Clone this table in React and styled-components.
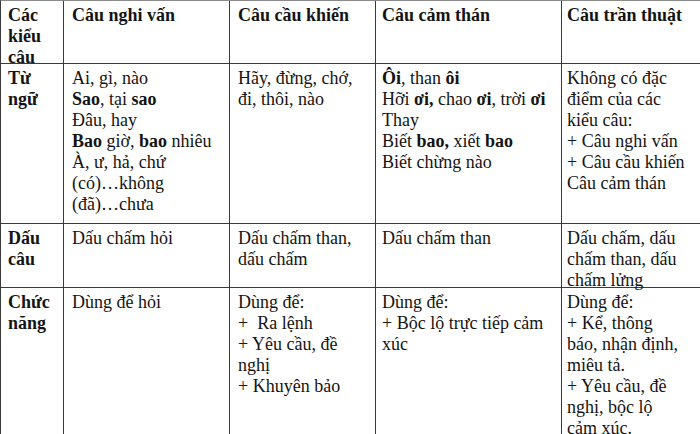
import React from 'react';
import styled, { createGlobalStyle } from 'styled-components';

const GlobalStyle = createGlobalStyle`
  html, body {
    margin: 0;
    padding: 0;
    background: #ffffff;
    overflow: hidden;
  }
`;

const Table = styled.div`
  display: grid;
  grid-template-columns: 63px 166px 146px 186px 160px;
  grid-template-rows: 63px 160px 64px 160px;
  width: 722px;
  border-top: 1px solid #8a8a8a;
  border-left: 1px solid #3a3a3a;
  font-family: "Liberation Serif", "Times New Roman", serif;
  font-size: 18px;
  line-height: 21px;
  color: #141414;
`;

const Cell = styled.div`
  border-right: 1px solid #3a3a3a;
  border-bottom: 1px solid #3a3a3a;
  padding: 4px 4px 0 ${(p) => p.$pad}px;
  overflow: visible;
  white-space: pre;
  font-weight: ${(p) => (p.$head ? 700 : 400)};
`;

const Line = styled.div``;

const pads = [7, 8, 8, 6, 5];

const rows = [
  [
    ['Các', 'kiểu', 'câu'],
    ['Câu nghi vấn'],
    ['Câu cầu khiến'],
    ['Câu cảm thán'],
    ['Câu trần thuật'],
  ],
  [
    ['Từ', 'ngữ'],
    [
      'Ai, gì, nào',
      <><b>Sao</b>, tại <b>sao</b></>,
      'Đâu, hay',
      <><b>Bao</b> giờ, <b>bao</b> nhiêu</>,
      'À, ư, hả, chứ',
      '(có)…không',
      '(đã)…chưa',
    ],
    ['Hãy, đừng, chớ,', 'đi, thôi, nào'],
    [
      <><b>Ôi</b>, than <b>ôi</b></>,
      <>Hỡi <b>ơi,</b> chao <b>ơi</b>, trời <b>ơi</b></>,
      'Thay',
      <>Biết <b>bao,</b> xiết <b>bao</b></>,
      'Biết chừng nào',
    ],
    [
      'Không có đặc',
      'điểm của các',
      'kiểu câu:',
      '+ Câu nghi vấn',
      '+ Câu cầu khiến',
      'Câu cảm thán',
    ],
  ],
  [
    ['Dấu', 'câu'],
    ['Dấu chấm hỏi'],
    ['Dấu chấm than,', 'dấu chấm'],
    ['Dấu chấm than'],
    ['Dấu chấm, dấu', 'chấm than, dấu', 'chấm lửng'],
  ],
  [
    ['Chức', 'năng'],
    ['Dùng để hỏi'],
    ['Dùng để:', '+  Ra lệnh', '+ Yêu cầu, đề', 'nghị', '+ Khuyên bảo'],
    ['Dùng để:', '+ Bộc lộ trực tiếp cảm', 'xúc'],
    [
      'Dùng để:',
      '+ Kể, thông',
      'báo, nhận định,',
      'miêu tả.',
      '+ Yêu cầu, đề',
      'nghị, bộc lộ',
      'cảm xúc.',
    ],
  ],
];

const App = () => (
  <>
    <GlobalStyle />
    <Table>
      {rows.map((row, r) =>
        row.map((lines, c) => (
          <Cell key={`${r}-${c}`} $pad={pads[c]} $head={r === 0 || c === 0}>
            {lines.map((text, i) => (
              <Line key={i}>{text}</Line>
            ))}
          </Cell>
        ))
      )}
    </Table>
  </>
);

export default App;
